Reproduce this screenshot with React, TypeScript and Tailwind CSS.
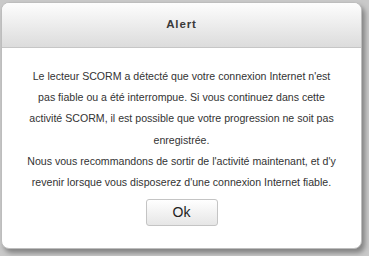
export default function App() {
  return (
    <div className="w-[369px] h-[256px] bg-[#c9c9c9] pt-[2px] pl-[1px] font-['Liberation_Sans',Arial,sans-serif] overflow-hidden">
      <div className="w-[361px] h-[247px] bg-white rounded-[8px] border border-[#bdbdbd] shadow-[3px_4px_5px_rgba(0,0,0,0.35)] flex flex-col overflow-hidden">
        <div className="h-[45px] shrink-0 flex items-center justify-center bg-gradient-to-b from-[#fdfdfd] to-[#dcdcdc] border-b border-[#c6c6c6]">
          <span className="text-[11.5px] font-bold tracking-[0.9px] text-[#3a3a3a]">Alert</span>
        </div>
        <div className="flex flex-col items-center pt-[18px]">
          <p className="text-[10.6px] leading-[21.2px] text-[#333] text-center whitespace-nowrap">
            Le lecteur SCORM a détecté que votre connexion Internet n'est
            <br />
            pas fiable ou a été interrompue. Si vous continuez dans cette
            <br />
            activité SCORM, il est possible que votre progression ne soit pas
            <br />
            enregistrée.
            <br />
            Nous vous recommandons de sortir de l'activité maintenant, et d'y
            <br />
            revenir lorsque vous disposerez d'une connexion Internet fiable.
          </p>
          <button className="mt-[6px] w-[72px] h-[27px] rounded-[3px] border border-[#c4c4c4] bg-gradient-to-b from-[#ffffff] to-[#e6e6e6] text-[14px] text-[#222]">
            Ok
          </button>
        </div>
      </div>
    </div>
  );
}
